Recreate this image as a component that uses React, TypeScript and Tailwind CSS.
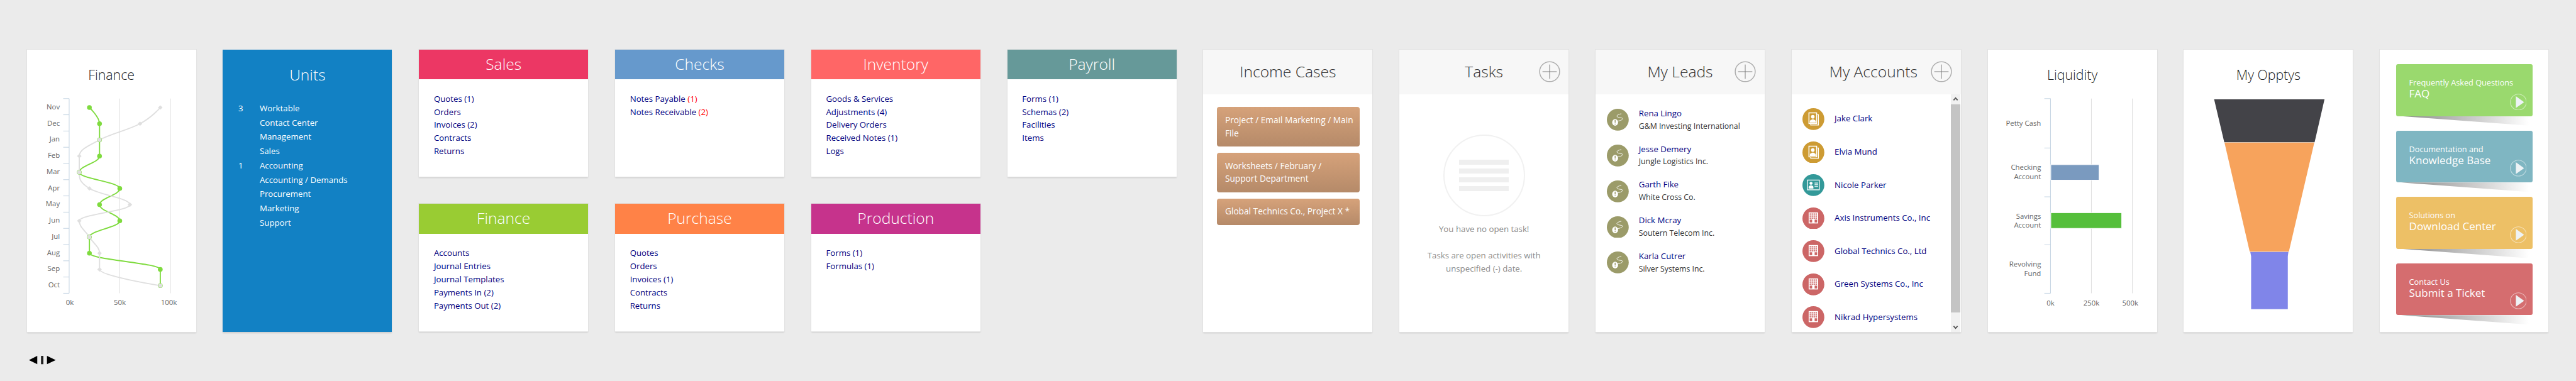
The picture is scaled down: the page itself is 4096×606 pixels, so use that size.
import React from "react";

const modulesTop = [
  { title: "Sales", color: "bg-[#ec3764]", items: [["Quotes (1)"], ["Orders"], ["Invoices (2)"], ["Contracts"], ["Returns"]] },
  { title: "Checks", color: "bg-[#6699cc]", items: [["Notes Payable ", "(1)"], ["Notes Receivable ", "(2)"]] },
  { title: "Inventory", color: "bg-[#ff6666]", items: [["Goods & Services"], ["Adjustments (4)"], ["Delivery Orders"], ["Received Notes (1)"], ["Logs"]] },
  { title: "Payroll", color: "bg-[#669999]", items: [["Forms (1)"], ["Schemas (2)"], ["Facilities"], ["Items"]] },
];

const modulesBottom = [
  { title: "Finance", color: "bg-[#99cc33]", items: [["Accounts"], ["Journal Entries"], ["Journal Templates"], ["Payments In (2)"], ["Payments Out (2)"]] },
  { title: "Purchase", color: "bg-[#ff8247]", items: [["Quotes"], ["Orders"], ["Invoices (1)"], ["Contracts"], ["Returns"]] },
  { title: "Production", color: "bg-[#c6338c]", items: [["Forms (1)"], ["Formulas (1)"]] },
];

const units = [
  ["3", "Worktable"],
  ["", "Contact Center"],
  ["", "Management"],
  ["", "Sales"],
  ["1", "Accounting"],
  ["", "Accounting / Demands"],
  ["", "Procurement"],
  ["", "Marketing"],
  ["", "Support"],
];

const incomeCases = [
  ["Project / Email Marketing / Main", "File"],
  ["Worksheets / February /", "Support Department"],
  ["Global Technics Co., Project X *"],
];

const leads = [
  ["Rena Lingo", "G&M Investing International"],
  ["Jesse Demery", "Jungle Logistics Inc."],
  ["Garth Fike", "White Cross Co."],
  ["Dick Mcray", "Soutern Telecom Inc."],
  ["Karla Cutrer", "Silver Systems Inc."],
];

const accounts = [
  { name: "Jake Clark", kind: "contact" },
  { name: "Elvia Mund", kind: "contact" },
  { name: "Nicole Parker", kind: "card" },
  { name: "Axis Instruments Co., Inc", kind: "building" },
  { name: "Global Technics Co., Ltd", kind: "building" },
  { name: "Green Systems Co., Inc", kind: "building" },
  { name: "Nikrad Hypersystems", kind: "building" },
];

const tiles = [
  { small: "Frequently Asked Questions", big: "FAQ", color: "bg-[#9ad96e]" },
  { small: "Documentation and", big: "Knowledge Base", color: "bg-[#7fb6c2]" },
  { small: "Solutions on", big: "Download Center", color: "bg-[#edc066]" },
  { small: "Contact Us", big: "Submit a Ticket", color: "bg-[#d56d6f]" },
];

const months = ["Nov", "Dec", "Jan", "Feb", "Mar", "Apr", "May", "Jun", "Jul", "Aug", "Sep", "Oct"];
const greenSeries = [20, 30, 30, 30, 10, 50, 30, 50, 20, 20, 90, 90];
const greySeries = [90, 70, 30, 10, 10, 20, 60, 10, 20, 30, 30, 90];

const valueX = (v: number) => 70.7 + 1.7 * v;
const monthY = (i: number) => 97 + 27.2 * i;

// same smoothing as the chart lib's spline, category axis runs down the page
function splinePath(values: number[]) {
  const pts = values.map((v, i) => ({ c: monthY(i), v: valueX(v) }));
  const conts = pts.map((p, i) => {
    const last = pts[i - 1];
    const next = pts[i + 1];
    if (!last || !next) return { lc: p.c, lv: p.v, rc: p.c, rv: p.v };
    const lc = (1.5 * p.c + last.c) / 2.5;
    let lv = (1.5 * p.v + last.v) / 2.5;
    const rc = (1.5 * p.c + next.c) / 2.5;
    let rv = (1.5 * p.v + next.v) / 2.5;
    const fix = ((rv - lv) * (rc - p.c)) / (rc - lc) + p.v - rv;
    lv += fix;
    rv += fix;
    if (lv > last.v && lv > p.v) {
      lv = Math.max(last.v, p.v);
      rv = 2 * p.v - lv;
    } else if (lv < last.v && lv < p.v) {
      lv = Math.min(last.v, p.v);
      rv = 2 * p.v - lv;
    }
    if (rv > next.v && rv > p.v) {
      rv = Math.max(next.v, p.v);
      lv = 2 * p.v - rv;
    } else if (rv < next.v && rv < p.v) {
      rv = Math.min(next.v, p.v);
      lv = 2 * p.v - rv;
    }
    return { lc, lv, rc, rv };
  });
  let d = `M${pts[0].v} ${pts[0].c}`;
  for (let i = 1; i < pts.length; i++) {
    d += ` C${conts[i - 1].rv} ${conts[i - 1].rc} ${conts[i].lv} ${conts[i].lc} ${pts[i].v} ${pts[i].c}`;
  }
  return d;
}

function Card({ children, className = "" }: { children: React.ReactNode; className?: string }) {
  return (
    <div className={`bg-white shadow-[0_0_0_1px_#e2e2e2,0_2px_2px_rgba(0,0,0,0.12)] ${className}`}>
      {children}
    </div>
  );
}

function ModuleCard({ title, color, items, tall }: { title: string; color: string; items: string[][]; tall?: boolean }) {
  return (
    <Card className={`w-[269px] ${tall ? "h-[203px]" : "h-[202px]"}`}>
      <div className={`${color} h-[47.4px] flex items-center justify-center text-white font-light text-[24.6px]`}>
        {title}
      </div>
      <ul className="pt-[20.8px] pl-[23.7px] text-[13.26px] leading-[20.83px] text-[#000080]">
        {items.map((it) => (
          <li key={it.join("")}>
            {it[0]}
            {it[1] && <span className="text-[#ff0000]">{it[1]}</span>}
          </li>
        ))}
      </ul>
    </Card>
  );
}

function GreyHeader({ title, plus, shift }: { title: string; plus?: boolean; shift?: boolean }) {
  return (
    <div className="relative h-[71px] bg-[#f7f7f7] flex items-center justify-center text-[#333] font-light text-[24.6px]">
      <span className={shift ? "pr-[9px]" : ""}>{title}</span>
      {plus && (
        <svg viewBox="0 0 36 36" className="absolute right-[13.5px] top-[18.5px] w-[34px] h-[34px]">
          <circle cx="18" cy="18" r="16.8" fill="none" stroke="#aeaeae" strokeWidth="1.6" />
          <path d="M6 18H30M18 6V30" stroke="#777" strokeWidth="1" />
        </svg>
      )}
    </div>
  );
}

function ChartTitle({ children }: { children: React.ReactNode }) {
  return (
    <div className="pt-[24px] h-[56px] text-center text-[21.3px] leading-[32px] font-light text-[#222]">
      {children}
    </div>
  );
}

function FinanceChart() {
  return (
    <svg viewBox="0 59 284 415" className="w-[269px] h-[393px]">
      <path d="M155.7 82V409M240.7 82V409" stroke="#dcdcdc" strokeWidth="1" />
      <path d="M70.7 82V409" stroke="#c0d0e0" strokeWidth="1" />
      {Array.from({ length: 13 }).map((_, i) => (
        <path key={i} d={`M60.7 ${82 + 27.25 * i}H70.7`} stroke="#c0d0e0" strokeWidth="1" />
      ))}
      {months.map((m, i) => (
        <text key={m} x="55" y={monthY(i) + 3} textAnchor="end" fontSize="12" fill="#666">
          {m}
        </text>
      ))}
      <text x="71.7" y="429" textAnchor="middle" fontSize="12" fill="#666">0k</text>
      <text x="155.7" y="429" textAnchor="middle" fontSize="12" fill="#666">50k</text>
      <text x="238" y="429" textAnchor="middle" fontSize="12" fill="#666">100k</text>
      <path d={splinePath(greenSeries)} fill="none" stroke="#7fdb3f" strokeWidth="2" />
      <path d={splinePath(greySeries)} fill="none" stroke="#dfdfdf" strokeWidth="2" />
      {greenSeries.map((v, i) => (
        <circle key={i} cx={valueX(v)} cy={monthY(i)} r="4" fill="#7fdb3f" />
      ))}
      {greySeries.map((v, i) => {
        const x = valueX(v);
        const y = monthY(i);
        return v === greenSeries[i] ? (
          <circle key={i} cx={x} cy={y} r="3.5" fill="#dfdfdf" />
        ) : (
          <path key={i} d={`M${x} ${y - 3.8}L${x + 3.8} ${y}L${x} ${y + 3.8}L${x - 3.8} ${y}Z`} fill="#dfdfdf" />
        );
      })}
    </svg>
  );
}

function LiquidityChart() {
  const lab = { textAnchor: "end" as const, fontSize: 12, fill: "#666" };
  return (
    <svg viewBox="0 59 284 415" className="w-[269px] h-[393px]">
      <path d="M173.6 82V409M242.4 82V409" stroke="#dcdcdc" strokeWidth="1" />
      <path d="M105 82V409M94.6 82H105M94.6 165H105M94.6 247H105M94.6 327.7H105M94.6 409H105" fill="none" stroke="#c0d0e0" strokeWidth="1" />
      <rect x="105.5" y="193" width="81" height="26" fill="#7a9abf" stroke="#fff" strokeWidth="1" />
      <rect x="105.5" y="273.7" width="119" height="26.3" fill="#55bf3b" stroke="#fff" strokeWidth="1" />
      <text x="89" y="127.7" {...lab}>Petty Cash</text>
      <text x="89" y="202" {...lab}>Checking</text>
      <text x="89" y="217" {...lab}>Account</text>
      <text x="89" y="283.7" {...lab}>Savings</text>
      <text x="89" y="299" {...lab}>Account</text>
      <text x="89" y="364" {...lab}>Revolving</text>
      <text x="89" y="379.7" {...lab}>Fund</text>
      <text x="105" y="429.7" textAnchor="middle" fontSize="12" fill="#666">0k</text>
      <text x="173.6" y="429.7" textAnchor="middle" fontSize="12" fill="#666">250k</text>
      <text x="239" y="429.7" textAnchor="middle" fontSize="12" fill="#666">500k</text>
    </svg>
  );
}

function FunnelChart() {
  return (
    <svg viewBox="0 59 284 415" className="w-[269px] h-[393px]">
      <polygon points="51.3,83.3 236.6,83.3 220,155.3 68.3,155.3" fill="#434348" />
      <polygon points="68.7,156 219.5,156 176.8,339 111,339" fill="#f7a35c" />
      <polygon points="112,339.7 176,339.7 175,347 175,435.7 113.4,435.7 113.4,347" fill="#8085e9" />
    </svg>
  );
}

function LeadIcon() {
  return (
    <svg viewBox="0 0 37 37" className="w-[34.8px] h-[34.8px] shrink-0">
      <circle cx="18.5" cy="18.5" r="18.5" fill="#9b9b69" />
      <path d="M17 21C22 20.5 27.5 18.5 26.5 16.5C25.5 14.5 17.5 15.5 17 12.5C16.7 10.5 21 9 24.5 8.5" fill="none" stroke="#fff" strokeWidth="1" />
      <ellipse cx="14" cy="23" rx="5" ry="5.6" fill="#fff" />
      <path d="M14 18.8V23.6M14 25.2V26.6" stroke="#9b9b69" strokeWidth="1.5" />
    </svg>
  );
}

function AccountIcon({ kind }: { kind: string }) {
  if (kind === "contact") {
    return (
      <svg viewBox="0 0 37 37" className="w-[34.8px] h-[34.8px] shrink-0">
        <circle cx="18.5" cy="18.5" r="18.5" fill="#cd9b33" />
        <path d="M25 11H27V28.5H14V26.5" fill="none" stroke="#fff" strokeWidth="1.4" />
        <rect x="11" y="8" width="13" height="18" fill="none" stroke="#fff" strokeWidth="1.6" />
        <circle cx="17.5" cy="14.5" r="3" fill="#fff" />
        <path d="M12.5 24.5V22.5C12.5 20.5 15 20 16.5 19H18.5C20 20 22.5 20.5 22.5 22.5V24.5Z" fill="#fff" />
      </svg>
    );
  }
  if (kind === "card") {
    return (
      <svg viewBox="0 0 37 37" className="w-[34.8px] h-[34.8px] shrink-0">
        <circle cx="18.5" cy="18.5" r="18.5" fill="#339999" />
        <rect x="8.5" y="10" width="20" height="16.5" fill="none" stroke="#fff" strokeWidth="1.4" />
        <circle cx="14.5" cy="15.5" r="2.6" fill="#fff" />
        <path d="M10.5 24.5V21.5C10.5 20 13 19 14.5 19C16 19 18.5 20 18.5 21.5V24.5Z" fill="#fff" />
        <path d="M20.5 15H26.5M20.5 18H26.5M20.5 21H26.5" stroke="#fff" strokeWidth="1.3" />
      </svg>
    );
  }
  const holes: number[][] = [];
  for (let r = 0; r < 3; r++) for (let c = 0; c < 4; c++) holes.push([c, r]);
  return (
    <svg viewBox="0 0 37 37" className="w-[34.8px] h-[34.8px] shrink-0">
      <circle cx="18.5" cy="18.5" r="18.5" fill="#cc6666" />
      <rect x="10.5" y="8.3" width="16" height="18.7" fill="#fff" />
      {holes.map(([c, r]) => (
        <rect key={`${c}-${r}`} x={12.2 + c * 3.3} y={10 + r * 3.4} width="2.2" height="2.3" fill="#cc6666" />
      ))}
      <rect x="12.2" y="20.5" width="4.2" height="4.8" fill="#cc6666" />
      <rect x="20.6" y="20.5" width="4.2" height="4.8" fill="#cc6666" />
    </svg>
  );
}

function Tile({ small, big, color }: { small: string; big: string; color: string }) {
  return (
    <div className="relative h-[82.5px]">
      <div className="absolute left-[8px] right-[6px] top-full h-[15px] bg-gradient-to-r from-[#8a8a8a] to-white [clip-path:polygon(0_0,100%_0,100%_100%)]" />
      <div className={`relative h-full rounded-[3px] ${color} pt-[19.9px] pl-[20.8px] text-white`}>
        <div className="text-[12.7px] leading-[18.3px]">{small}</div>
        <div className="text-[17px] leading-[18.3px]">{big}</div>
        <svg viewBox="0 0 28 28" className="absolute right-[9.3px] bottom-[9.3px] w-[26.8px] h-[26.8px]">
          <circle cx="14" cy="14" r="13.2" fill="none" stroke="#fff" strokeOpacity="0.5" strokeWidth="1.2" />
          <path d="M9.8 4.2L23.5 14L9.8 23.8Z" fill="#eef3f6" />
        </svg>
      </div>
    </div>
  );
}

export default function App() {
  return (
    <div className="h-[606px] overflow-hidden bg-[#ebebeb] pt-[78.6px] pl-[42.6px] font-['Open_Sans',sans-serif]">
      <div className="flex gap-x-[42.8px]">
        <Card className="w-[269px] h-[449px]">
          <ChartTitle>Finance</ChartTitle>
          <FinanceChart />
        </Card>

        <div className="w-[269px] h-[449px] bg-[#1281c4] shadow-[0_2px_2px_rgba(0,0,0,0.12)] text-white">
          <div className="pt-[20.6px] h-[60.6px] text-center text-[24.6px] leading-[40px] font-light">Units</div>
          <div className="mt-[21.7px] pl-[24.6px] grid grid-cols-[34px_1fr] text-[13.26px] leading-[22.73px]">
            {units.map(([n, name]) => (
              <React.Fragment key={name}>
                <span>{n}</span>
                <span>{name}</span>
              </React.Fragment>
            ))}
          </div>
        </div>

        <div className="flex flex-col gap-y-[43.6px]">
          <div className="flex gap-x-[42.8px]">
            {modulesTop.map((m) => (
              <ModuleCard key={m.title} {...m} />
            ))}
          </div>
          <div className="flex gap-x-[42.8px]">
            {modulesBottom.map((m) => (
              <ModuleCard key={m.title} {...m} tall />
            ))}
          </div>
        </div>

        <Card className="w-[269px] h-[449px]">
          <GreyHeader title="Income Cases" />
          <div className="pt-[20.8px] pl-[21.3px] pr-[20px] flex flex-col gap-y-[10.4px]">
            {incomeCases.map((lines) => (
              <div key={lines[0]} className="rounded-[4px] bg-gradient-to-b from-[#d6a27a] to-[#b58a69] py-[10.4px] pl-[13.3px] text-white text-[13.7px] leading-[20.83px]">
                {lines.map((l) => (
                  <div key={l} className="whitespace-nowrap">{l}</div>
                ))}
              </div>
            ))}
          </div>
        </Card>

        <Card className="w-[269px] h-[449px]">
          <GreyHeader title="Tasks" plus />
          <div className="pt-[64.4px] flex flex-col items-center text-[#8c8c8c] text-[13.26px] leading-[20.83px]">
            <div className="w-[129.7px] h-[129.7px] rounded-full border-2 border-[#f1f1f1] flex flex-col items-center justify-center gap-y-[6.2px]">
              <div className="w-[78.6px] h-[8px] bg-[#efefef]" />
              <div className="w-[78.6px] h-[8px] bg-[#efefef]" />
              <div className="w-[78.6px] h-[8px] bg-[#efefef]" />
              <div className="w-[78.6px] h-[8px] bg-[#efefef]" />
            </div>
            <p className="mt-[10.4px]">You have no open task!</p>
            <p className="mt-[20.8px] text-center">
              Tasks are open activities with
              <br />
              unspecified (-) date.
            </p>
          </div>
        </Card>

        <Card className="w-[269px] h-[449px]">
          <GreyHeader title="My Leads" plus />
          <div className="pt-[20.3px] pl-[18px] flex flex-col gap-y-[15.1px] text-[13.26px] leading-[20.83px]">
            {leads.map(([name, company]) => (
              <div key={name} className="flex items-center gap-x-[16px]">
                <LeadIcon />
                <div>
                  <div className="text-[#000080]">{name}</div>
                  <div className="text-[#333] text-[12.3px]">{company}</div>
                </div>
              </div>
            ))}
          </div>
        </Card>

        <Card className="w-[269px] h-[449px] overflow-hidden">
          <GreyHeader title="My Accounts" plus shift />
          <div className="flex h-[378px]">
            <div className="flex-1 pt-[13.5px] pl-[17px] overflow-hidden text-[13.26px] text-[#000080]">
              {accounts.map((a) => (
                <div key={a.name} className="h-[52.56px] flex items-center gap-x-[16.5px]">
                  <AccountIcon kind={a.kind} />
                  <span>{a.name}</span>
                </div>
              ))}
            </div>
            <div className="w-[15px] mr-[1px] flex flex-col bg-[#f1f1f1]">
              <div className="h-[16px] flex items-center justify-center">
                <svg viewBox="0 0 10 10" className="w-[9px] h-[9px]">
                  <path d="M1.5 7L5 3.2L8.5 7" fill="none" stroke="#505050" strokeWidth="2" />
                </svg>
              </div>
              <div className="h-[331.5px] bg-[#c4c4c4]" />
              <div className="flex-1 flex items-end justify-center pb-[3px]">
                <svg viewBox="0 0 10 10" className="w-[9px] h-[9px]">
                  <path d="M1.5 3L5 6.8L8.5 3" fill="none" stroke="#505050" strokeWidth="2" />
                </svg>
              </div>
            </div>
          </div>
        </Card>

        <Card className="w-[269px] h-[449px]">
          <ChartTitle>Liquidity</ChartTitle>
          <LiquidityChart />
        </Card>

        <Card className="w-[269px] h-[449px]">
          <ChartTitle>My Opptys</ChartTitle>
          <FunnelChart />
        </Card>

        <Card className="w-[268px] h-[449px] pt-[23.7px] pl-[25.6px] pr-[25.4px]">
          <div className="flex flex-col gap-y-[23px]">
            {tiles.map((t) => (
              <Tile key={t.big} {...t} />
            ))}
          </div>
        </Card>
      </div>

      <svg viewBox="0 0 45 14" className="mt-[38.7px] ml-[3.8px] w-[42.6px] h-[13.3px]">
        <path d="M14 0V14L0 7Z" fill="#000" />
        <rect x="20.3" y="0" width="4" height="14" fill="#222" />
        <path d="M30.3 0V14L45 7Z" fill="#000" />
      </svg>
    </div>
  );
}
